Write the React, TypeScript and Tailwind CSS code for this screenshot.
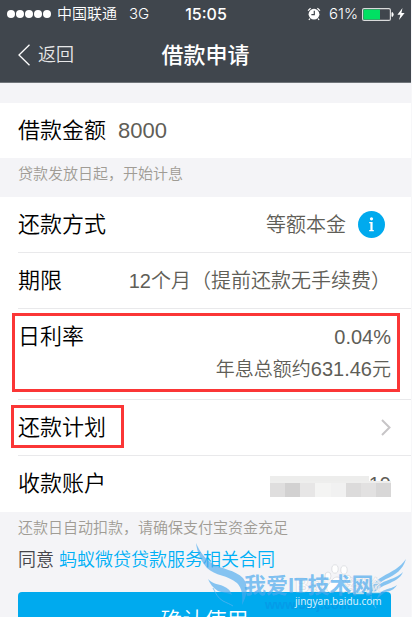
import type { ReactNode } from "react";

const MOSAIC = [
  "bg-[#dfdede]",
  "bg-[#d2d1d1]",
  "bg-[#e7e6e6]",
  "bg-[#f4f4f3]",
  "bg-[#f1f1f1]",
  "bg-[#dcdbdb]",
  "bg-[#e2e1e1]",
  "bg-[#d8d7d7]",
];

function Row({ label, last, children }: { label: ReactNode; last?: boolean; children?: ReactNode }) {
  return (
    <div className="pl-[18px]">
      <div
        className={`flex min-h-14 items-center justify-between pr-5 ${
          last ? "" : "border-b border-[#e9e9eb]"
        }`}
      >
        <span className="text-[22px] leading-8 text-black">{label}</span>
        {children}
      </div>
    </div>
  );
}

function StatusBar() {
  return (
    <div className="flex h-7 items-center justify-between pr-[6px] pl-[7px] font-['Inter','Noto_Sans_CJK_SC',sans-serif]">
      <div className="flex flex-1 items-center">
        <div className="flex gap-px">
          {[0, 1, 2, 3, 4].map((i) => (
            <span key={i} className="size-2 rounded-full bg-white" />
          ))}
        </div>
        <span className="ml-[6px] text-[15px]">中国联通</span>
        <span className="ml-3 text-[15px]">3G</span>
      </div>
      <span className="text-base font-medium">15:05</span>
      <div className="flex flex-1 items-center justify-end">
        <svg className="mr-2 size-[14px]" viewBox="0 0 14 14" fill="none">
          <circle cx="7" cy="7.2" r="5.4" fill="#fff" />
          <path d="M1 3.6 3.6 1.2M13 3.6 10.4 1.2" stroke="#fff" strokeWidth="1.2" />
          <path d="M3 11.5 1.9 13M11 11.5l1.1 1.5" stroke="#fff" strokeWidth="1.2" />
          <path d="M7.3 3.8v3.8H4.4" stroke="#40464d" strokeWidth="1.2" />
        </svg>
        <span className="text-[15px]">61%</span>
        <svg className="ml-1 h-[13px] w-[33px]" viewBox="0 0 33 13" fill="none">
          <rect x=".6" y=".6" width="27.8" height="11.8" rx="1.5" stroke="#d9dadb" strokeWidth="1.2" />
          <rect x="1.5" y="1.5" width="16.5" height="10" fill="#00e063" />
          <path d="M30 4.5c1.6.4 1.6 3.6 0 4z" fill="#fff" stroke="#fff" />
        </svg>
        <svg className="ml-[2px] h-3 w-2" viewBox="0 0 8 12" fill="#fff">
          <path d="M5.5 0 .4 6.8h3L2 12l5.6-7H4.4z" />
        </svg>
      </div>
    </div>
  );
}

function Watermark() {
  return (
    <svg
      className="pointer-events-none absolute top-[26px] left-[190px] h-[86px] w-[222px]"
      viewBox="190 536 222 86"
      fill="none"
    >
      <g fill="#4aa9ee" fillOpacity=".65">
        <path d="M196 541c4 9 9 16 17 21 9 5 22 6 30 14 6 8 4 18-1 27 1-10 0-17-5-22-9-8-22-7-30-15-6-7-10-16-11-25z" />
        <path d="M208 577c5 5 10 5 15 7 5 2 8 5 9 9-5-3-10-2-14-4-5-3-8-7-10-12z" />
        <path d="M406 557c-3 11-11 16-20 20-9 5-13 9-15 18-1-10 4-16 11-20 10-6 18-9 24-18z" />
        <path d="M403 570c-3 7-9 9-15 12-6 2-11 5-15 10 2-7 7-11 13-13 7-3 12-4 17-9z" />
        <path d="M397 583c-3 5-7 6-11 7-4 2-6 4-9 7 1-5 4-8 8-9 5-2 8-2 12-5z" />
      </g>
      <g stroke="#5db3f0" strokeOpacity=".7">
        <path d="M213 586c3 6 5 10 10 13 4 2 7 3 10 5" />
        <path d="M371 594c0 4 2 8 5 12" />
      </g>
      <g fill="#fff" fillOpacity=".85" stroke="#d2d3d8" strokeOpacity=".8" strokeWidth=".8">
        <ellipse cx="328" cy="574" rx="3" ry="4" />
        <ellipse cx="335" cy="567" rx="3.2" ry="4.2" />
        <ellipse cx="344" cy="568" rx="3.2" ry="4.2" />
        <ellipse cx="348" cy="577" rx="3" ry="3.8" />
        <path d="M337 575c4 0 6 5 9 8 3 4 0 8-4 7-4-1-6-1-10 0s-7-3-4-7c3-3 5-8 9-8z" />
      </g>
      <g
        fill="#fff"
        fillOpacity=".7"
        stroke="#cfd0d5"
        strokeOpacity=".7"
        strokeWidth=".6"
        fontWeight="700"
      >
        <text x="295" y="590" fontSize="20">
          Bai
        </text>
        <text x="347" y="590" fontSize="17">
          经验
        </text>
      </g>
      <text x="244" y="591" fill="#4aa9ee" fillOpacity=".7" fontSize="22" fontWeight="700">
        我爱IT技术网
      </text>
      <text x="265" y="607" fill="#0d86e0" fillOpacity=".4" fontSize="13" fontWeight="700">
        www.52ij.com
      </text>
      <text
        x="295"
        y="603"
        fill="#fff"
        fillOpacity=".85"
        fontSize="10"
        fontWeight="400"
        fontFamily="Noto Sans, sans-serif"
      >
        jingyan.baidu.com
      </text>
    </svg>
  );
}

export default function App() {
  return (
    <div className="h-screen overflow-y-auto border-r border-[#f7f7f9] bg-[#f4f4f7] font-['Liberation_Sans','Noto_Sans_CJK_SC',sans-serif] font-[350] text-[#5f5e57] [scrollbar-width:none]">
      <header className="h-[83px] border-b border-[#70757a] bg-[#40464d] text-white">
        <StatusBar />
        <div className="grid h-[54px] grid-cols-[1fr_auto_1fr] items-center px-[18px]">
          <button className="flex items-center gap-2 justify-self-start text-[18px] text-[#e6e7e8]">
            <svg className="h-[22px] w-3" viewBox="0 0 12 22" fill="none" stroke="#fff" strokeWidth="1.3">
              <path d="M11.5.8 1 11l10.5 10.2" />
            </svg>
            返回
          </button>
          <h1 className="text-[22px] font-medium">借款申请</h1>
        </div>
      </header>

      <main className="pt-5">
        <div className="flex h-[55px] items-center bg-white px-[18px]">
          <label htmlFor="amount" className="shrink-0 text-[22px] leading-8 text-black">
            借款金额
          </label>
          <input
            id="amount"
            inputMode="numeric"
            defaultValue="8000"
            className="ml-3 min-w-0 flex-1 bg-transparent text-[22px] leading-8 font-normal outline-none"
          />
        </div>
        <p className="h-[39px] px-[18px] pt-1 text-[15px] leading-6 text-[#a09c95]">
          贷款发放日起，开始计息
        </p>

        <section className="bg-white">
          <Row label="还款方式">
            <div className="flex items-center gap-3 pr-[6px] text-xl">
              等额本金
              <button aria-label="还款方式说明">
                <svg className="size-[27px]" viewBox="0 0 27 27">
                  <circle cx="13.5" cy="13.5" r="13.5" fill="#00aaee" />
                  <circle cx="13.5" cy="7.8" r="1.6" fill="#fff" />
                  <path d="M11.2 11h3.4v8h1.2v1.3h-4.6V19h1.2v-6.7h-1.2z" fill="#fff" />
                </svg>
              </button>
            </div>
          </Row>
          <Row label="期限">
            <span className="text-xl">
              <span className="font-normal">12</span>个月（提前还款无手续费）
            </span>
          </Row>

          <div className="relative pl-[18px]">
            <div className="flex justify-between border-b border-[#e9e9eb] pt-3 pr-5 pb-[13px]">
              <span className="text-[22px] leading-8 text-black">日利率</span>
              <div className="text-right">
                <p className="text-xl leading-8 font-normal">0.04%</p>
                <p className="text-[19px] leading-8">
                  年息总额约<span className="text-xl leading-8 font-normal">631.46</span>元
                </p>
              </div>
            </div>
            <div className="absolute top-1 right-[11px] bottom-2 left-3 border-3 border-[#fb3636]" />
          </div>

          <div className="relative">
            <Row label="还款计划">
              <button aria-label="查看还款计划">
                <svg
                  className="h-[17px] w-[10px]"
                  viewBox="0 0 10 17"
                  fill="none"
                  stroke="#c7c5c7"
                  strokeWidth="2"
                >
                  <path d="m1 1 7.5 7.5L1 16" />
                </svg>
              </button>
            </Row>
            <div className="absolute top-[5px] bottom-2 left-[11px] w-[113px] border-3 border-[#fb3636]" />
          </div>

          <Row label="收款账户" last>
            <div className="mt-1 w-[121px]">
              <div className="flex h-[5px] overflow-hidden">
                <div className="flex-1 bg-[#ededec]" />
                <span className="text-xl leading-4 font-normal">19</span>
              </div>
              <div className="flex h-4 border-t-2 border-[#eeeeed]">
                {MOSAIC.map((color, i) => (
                  <span key={i} className={`flex-1 ${color}`} />
                ))}
              </div>
            </div>
          </Row>
        </section>

        <footer className="relative px-[18px] pt-1 pb-6">
          <p className="text-[15px] leading-6 text-[#a09c95]">还款日自动扣款，请确保支付宝资金充足</p>
          <p className="mt-2 text-lg leading-6 text-[#45454a]">
            同意{" "}
            <a href="#contract" className="text-[#00b0f6]">
              蚂蚁微贷贷款服务相关合同
            </a>
          </p>
          <div className="pt-5 pr-[2px]">
            <button className="h-14 w-full rounded bg-[#00aaee] text-[22px] text-white">
              确认使用
            </button>
          </div>
          <Watermark />
        </footer>
      </main>
    </div>
  );
}
